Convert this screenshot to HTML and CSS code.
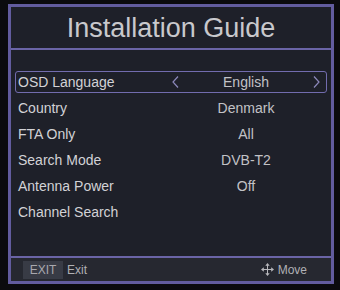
FILE: index.html
```html
<!DOCTYPE html>
<html>
<head>
<meta charset="utf-8">
<link rel="stylesheet" href="styles.css">
</head>
<body>
<div class="frame">
  <div class="header">Installation Guide</div>
  <div class="list">
    <div class="row selected">
      <span class="label">OSD Language</span>
      <span class="value">
        <svg class="arrow left" width="7" height="12" viewBox="0 0 7 12"><polyline points="6,0.5 1,6 6,11.5" fill="none" stroke="#8c88ba" stroke-width="1.2"/></svg>
        <span class="val">English</span>
        <svg class="arrow right" width="7" height="12" viewBox="0 0 7 12"><polyline points="1,0.5 6,6 1,11.5" fill="none" stroke="#8c88ba" stroke-width="1.2"/></svg>
      </span>
    </div>
    <div class="row">
      <span class="label">Country</span>
      <span class="value"><span class="val">Denmark</span></span>
    </div>
    <div class="row">
      <span class="label">FTA Only</span>
      <span class="value"><span class="val">All</span></span>
    </div>
    <div class="row">
      <span class="label">Search Mode</span>
      <span class="value"><span class="val">DVB-T2</span></span>
    </div>
    <div class="row">
      <span class="label">Antenna Power</span>
      <span class="value"><span class="val">Off</span></span>
    </div>
    <div class="row">
      <span class="label">Channel Search</span>
      <span class="value"></span>
    </div>
  </div>
  <div class="footer">
    <div class="hint"><span class="key">EXIT</span><span>Exit</span></div>
    <div class="hint">
      <svg class="move" width="13" height="13" viewBox="0 0 13 13">
        <g fill="#b8b8bc">
          <rect x="6" y="2" width="1" height="9"/>
          <rect x="2" y="6" width="9" height="1"/>
          <polygon points="6.5,0 4.3,2.8 8.7,2.8"/>
          <polygon points="6.5,13 4.3,10.2 8.7,10.2"/>
          <polygon points="0,6.5 2.8,4.3 2.8,8.7"/>
          <polygon points="13,6.5 10.2,4.3 10.2,8.7"/>
        </g>
      </svg>
      <span>Move</span>
    </div>
  </div>
</div>
</body>
</html>
```
FILE: styles.css
```css
html, body {
  margin: 0;
  padding: 0;
  background: #0b0b0e;
  width: 340px;
  height: 290px;
  overflow: hidden;
  font-family: "Liberation Sans", Arial, sans-serif;
}
.frame {
  box-sizing: border-box;
  margin: 4px 0 0 8px;
  width: 326px;
  height: 280px;
  border: 3px solid #625c9e;
  background: #1e2029;
  display: flex;
  flex-direction: column;
}
.header {
  box-sizing: border-box;
  height: 43px;
  padding-top: 1px;
  border-bottom: 2px solid #6a64a6;
  display: flex;
  align-items: center;
  justify-content: center;
  color: #c8c8cc;
  font-size: 27px;
}
.list {
  flex: 1;
  padding: 21px 4px 0 4px;
  display: flex;
  flex-direction: column;
  gap: 4px;
}
.row {
  box-sizing: border-box;
  height: 22px;
  display: flex;
  align-items: center;
  border: 1px solid transparent;
  border-radius: 3px;
  font-size: 14px;
}
.row.selected {
  border-color: #726cae;
}
.label {
  flex: 1;
  padding-left: 2px;
  color: #d2d2d6;
}
.value {
  width: 148px;
  margin-right: 6px;
  display: flex;
  align-items: center;
  justify-content: center;
  color: #c2c2c6;
  position: relative;
}
.arrow {
  position: absolute;
  top: 2px;
}
.arrow.left { left: 0; }
.arrow.right { right: 0; }
.footer {
  height: 25px;
  box-sizing: border-box;
  border-top: 2px solid #6a64a6;
  background: #262830;
  display: flex;
  align-items: center;
  justify-content: space-between;
  padding: 0 24px 0 12px;
  font-size: 12px;
  color: #b0b0b4;
}
.hint {
  display: flex;
  align-items: center;
  gap: 4px;
}
.key {
  background: #383b45;
  color: #a8a8ae;
  padding: 2px 6px;
  font-size: 12px;
  width: 28px;
  text-align: center;
}
.move {
  display: block;
}
```
